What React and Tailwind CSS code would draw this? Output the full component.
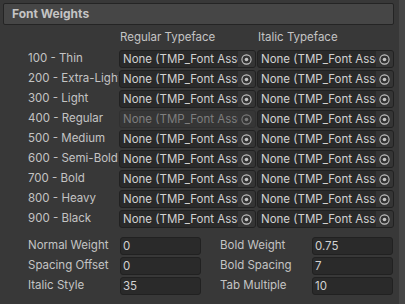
import React from "react";

const weights = [
  "100 - Thin",
  "200 - Extra-Light",
  "300 - Light",
  "400 - Regular",
  "500 - Medium",
  "600 - Semi-Bold",
  "700 - Bold",
  "800 - Heavy",
  "900 - Black",
];

function PickerIcon({ dim }) {
  return (
    <svg width="11" height="11" viewBox="0 0 11 11" className="block">
      <circle cx="5.5" cy="5.5" r="4.6" fill="none" stroke={dim ? "#7a7a7a" : "#c4c4c4"} strokeWidth="1.1" />
      <circle cx="5.5" cy="5.5" r="1.8" fill={dim ? "#7a7a7a" : "#c4c4c4"} />
    </svg>
  );
}

function ObjectField({ disabled }) {
  return (
    <div
      className={
        "h-[18px] flex rounded-[3px] border overflow-hidden " +
        (disabled ? "border-[#303030] bg-[#363636]" : "border-[#212121] bg-[#2a2a2a]")
      }
    >
      <div
        className={
          "flex-1 min-w-0 pl-[3px] leading-[16px] whitespace-nowrap overflow-hidden " +
          (disabled ? "text-[#7e7e7e]" : "text-[#d2d2d2]")
        }
      >
        None (TMP_Font Asset)
      </div>
      <div
        className={
          "w-[17px] flex items-center justify-center " + (disabled ? "bg-[#363636]" : "bg-[#353535]")
        }
      >
        <PickerIcon dim={disabled} />
      </div>
    </div>
  );
}

function NumField({ value }) {
  return (
    <div className="h-[18px] rounded-[3px] border border-[#212121] bg-[#2a2a2a] pl-[2px] leading-[16px] text-[#d2d2d2] whitespace-nowrap overflow-hidden">
      {value}
    </div>
  );
}

function Pair({ label, value }) {
  return (
    <>
      <div className="whitespace-nowrap overflow-hidden">{label}</div>
      <NumField value={value} />
    </>
  );
}

export default function App() {
  return (
    <div className="w-[405px] h-[304px] bg-[#383838] flex overflow-hidden font-['Inter',_'Noto_Sans',_sans-serif] text-[11.5px] text-[#c4c4c4]">
      <div className="w-[399px] pl-[3px] pt-[3px] flex flex-col">
        <div className="w-[391px] h-[22px] border border-[#242424] bg-[#464646] rounded-[2px] pl-[8px] flex items-center font-bold text-[12px] text-[#c4c4c4]">
          Font Weights
        </div>
        <div className="pl-[25px] flex flex-col">
          <div className="h-[25px] grid grid-cols-[90px_137px_137px] gap-x-[1px] items-center">
            <div />
            <div className="pl-[1px]">Regular Typeface</div>
            <div className="pl-[1px]">Italic Typeface</div>
          </div>
          <div className="flex flex-col gap-[2px]">
            {weights.map((w, i) => (
              <div key={w} className="grid grid-cols-[90px_137px_137px] gap-x-[1px] items-center">
                <div className="whitespace-nowrap overflow-hidden">{w}</div>
                <ObjectField disabled={i === 3} />
                <ObjectField />
              </div>
            ))}
          </div>
          <div className="mt-[9px] flex gap-[19px]">
            <div className="grid grid-cols-[92px_81px] gap-y-[2px] items-center">
              <Pair label="Normal Weight" value="0" />
              <Pair label="Spacing Offset" value="0" />
              <Pair label="Italic Style" value="35" />
            </div>
            <div className="grid grid-cols-[92px_81px] gap-y-[2px] items-center">
              <Pair label="Bold Weight" value="0.75" />
              <Pair label="Bold Spacing" value="7" />
              <Pair label="Tab Multiple" value="10" />
            </div>
          </div>
        </div>
      </div>
      <div className="w-[6px] h-full bg-[#464646]" />
    </div>
  );
}
